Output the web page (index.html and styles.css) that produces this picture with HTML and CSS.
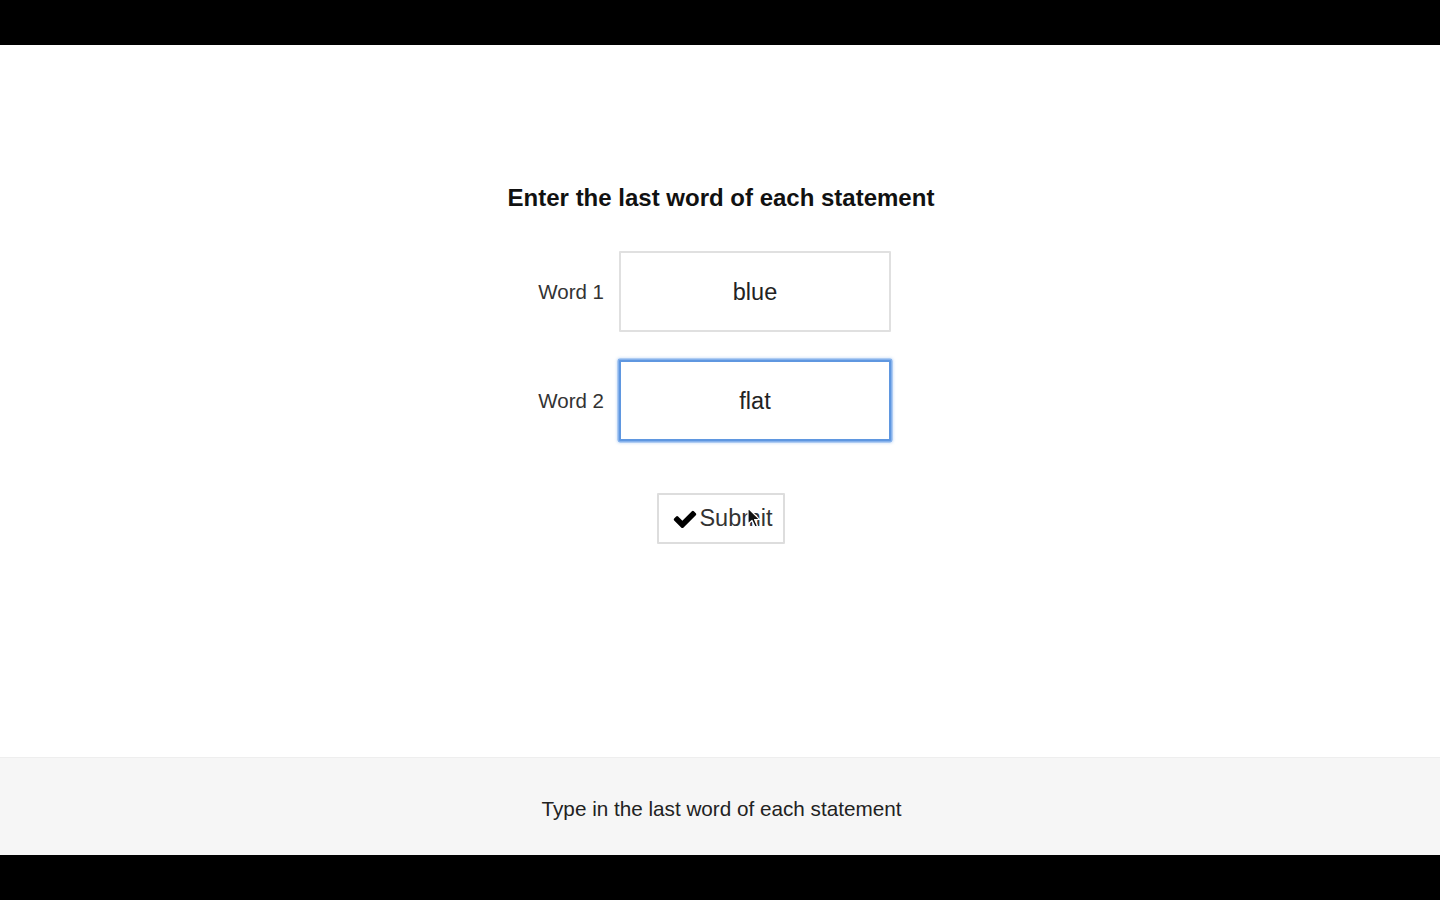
FILE: index.html
```html
<!DOCTYPE html>
<html lang="en">
<head>
<meta charset="utf-8">
<title>Enter the last word</title>
<link rel="stylesheet" href="styles.css">
</head>
<body>
<div class="bar"></div>
<main class="main">
  <h1 class="title">Enter the last word of each statement</h1>
  <form class="form">
    <div class="row">
      <label class="label" for="w1">Word 1</label>
      <input class="field" id="w1" type="text" value="blue">
    </div>
    <div class="row">
      <label class="label" for="w2">Word 2</label>
      <input class="field field-focus" id="w2" type="text" value="flat">
    </div>
    <div class="actions">
      <button class="btn" type="button">
        <svg class="check" viewBox="0 0 1792 1792" width="26" height="26" aria-hidden="true"><path d="M1671 566q0 40-28 68l-724 724-136 136q-28 28-68 28t-68-28l-136-136-362-362q-28-28-28-68t28-68l136-136q28-28 68-28t68 28l294 295 656-657q28-28 68-28t68 28l136 136q28 28 28 68z" fill="#000"/></svg>
        <span>Submit</span>
        <svg class="cursor" viewBox="0 0 14 22" width="14" height="22" aria-hidden="true"><path d="M1 1 L1 17 L5 13.5 L8 20 L10.5 19 L7.6 12.6 L12.5 12.4 Z" fill="#111" stroke="#fff" stroke-width="1.2" stroke-linejoin="round"/></svg>
      </button>
    </div>
  </form>
</main>
<footer class="footer">
  <p class="hint">Type in the last word of each statement</p>
</footer>
<div class="bar"></div>
</body>
</html>
```
FILE: styles.css
```css
html, body {
  margin: 0;
  padding: 0;
  background: #000;
}
body {
  font-family: "Liberation Sans", Arial, sans-serif;
  color: #333;
}
.bar {
  height: 45px;
  background: #000;
}
.main {
  background: #fff;
  height: 712px;
  box-sizing: border-box;
  padding-top: 139px;
  display: flex;
  flex-direction: column;
  align-items: center;
}
.title {
  margin: 0 0 39px 2px;
  font-size: 24px;
  line-height: 28px;
  font-weight: bold;
  color: #111;
}
.form {
  width: 440px;
  display: flex;
  flex-direction: column;
  gap: 27px;
}
.row {
  display: flex;
  align-items: center;
  gap: 15px;
}
.label {
  width: 104px;
  text-align: right;
  font-size: 20.5px;
  color: #333;
  padding-top: 1px;
}
.field {
  width: 272px;
  height: 81px;
  box-sizing: border-box;
  border: 2px solid #e0e0e0;
  border-radius: 1px;
  background: #fff;
  font-family: "Liberation Sans", Arial, sans-serif;
  font-size: 23.5px;
  color: #222;
  text-align: center;
  padding: 1px 0 0 0;
  outline: none;
}
.field-focus {
  margin-top: 1px;
  border: 2px solid #5f97e0;
  box-shadow: 0 0 0 1.5px #86b2ec, 0 0 3px 2px rgba(120, 170, 235, 0.45);
}
.actions {
  display: flex;
  justify-content: center;
  padding-top: 25px;
  padding-left: 2px;
}
.btn {
  position: relative;
  width: 128px;
  height: 51px;
  box-sizing: border-box;
  border: 2px solid #ddd;
  background: #fff;
  border-radius: 1px;
  display: flex;
  align-items: center;
  justify-content: center;
  gap: 1px;
  font-family: "Liberation Sans", Arial, sans-serif;
  font-size: 23.5px;
  color: #333;
  padding: 0 0 0 3px;
}
.check {
  display: block;
}
.cursor {
  position: absolute;
  left: 88px;
  top: 12px;
}
.footer {
  background: #f6f6f6;
  border-top: 1px solid #eee;
  height: 97px;
  display: flex;
  align-items: center;
  justify-content: center;
}
.hint {
  margin: 5px 0 0 3px;
  font-size: 20.7px;
  color: #222;
}
```
